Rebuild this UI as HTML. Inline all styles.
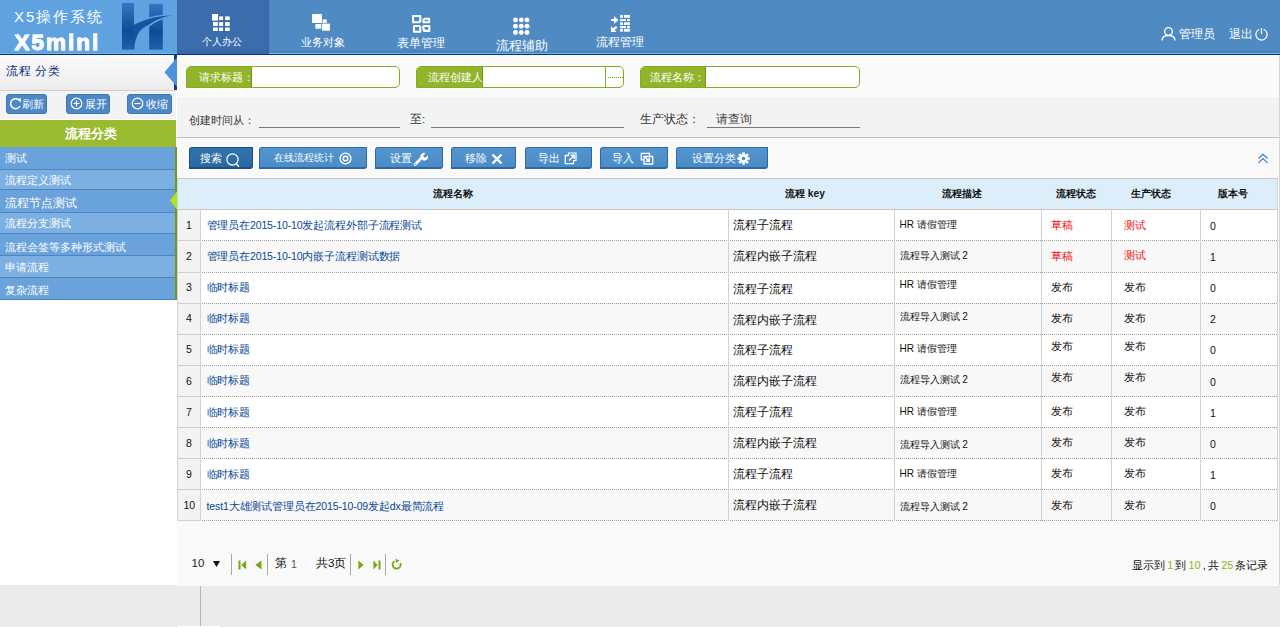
<!DOCTYPE html>
<html><head><meta charset="utf-8"><style>
*{box-sizing:border-box;margin:0;padding:0}
html,body{width:1280px;height:627px;overflow:hidden}
body{position:relative;background:#ebebeb;font-family:"Liberation Sans",sans-serif;font-size:11px;color:#333}
.a{position:absolute}
.t{position:absolute;white-space:nowrap;line-height:1}
.w{color:#fff}
</style></head><body>
<div class="a" style="left:0px;top:0px;width:1280px;height:55px;background:#4f8bc2"></div>
<div class="a" style="left:177px;top:50px;width:1103px;height:3px;background:#4a86bc"></div>
<div class="a" style="left:0px;top:0px;width:177px;height:53px;background:#5ea2e0"></div>
<div class="t w" style="left:14px;top:9px;font-size:15px;letter-spacing:2px">X5操作系统</div>
<div class="t" style="left:14.5px;top:31.5px;font-size:22.5px;font-weight:bold;letter-spacing:2.0px;-webkit-text-stroke:0.9px #fafafa;background:linear-gradient(#fff 50%,#e8e8e8);-webkit-background-clip:text;color:transparent">X5mini</div>
<svg class="a" style="left:118px;top:0" width="58" height="53" viewBox="0 0 58 53">
<defs><linearGradient id="hg" x1="0" y1="0" x2="0" y2="1"><stop offset="0" stop-color="#3474c4"/><stop offset="0.6" stop-color="#0f4c92"/><stop offset="1" stop-color="#1a62ad"/></linearGradient>
<clipPath id="cp"><rect x="24" y="0" width="40" height="53"/></clipPath></defs>
<rect x="4" y="3.1" width="12" height="46.5" fill="url(#hg)"/>
<rect x="31.2" y="3.9" width="13.6" height="45.7" fill="url(#hg)"/>
<path clip-path="url(#cp)" d="M15.9 25C24 21 36 16 54 15.6C46 16.5 38 19.5 31.2 24.6C26 27 22 30 20 34C17.5 39 16.5 44 16.3 49.6H15.9Z" fill="none" stroke="#5ea2e0" stroke-width="3.2"/>
<path d="M15.9 25C24 21 36 16 54 15.6C46 16.5 38 19.5 31.2 24.6C26 27 22 30 20 34C17.5 39 16.5 44 16.3 49.6H15.9Z" fill="#1554a0"/>
</svg>
<div class="a" style="left:0px;top:53px;width:1280px;height:1px;background:#72b2ee"></div>
<div class="a" style="left:0px;top:54px;width:1280px;height:1px;background:#0b3466"></div>
<div class="a" style="left:177px;top:0px;width:92px;height:54px;background:#3b6dac"></div>
<div class="a" style="left:177px;top:50px;width:92px;height:4px;background:#3767a8"></div>
<div class="a" style="left:267.5px;top:0px;width:1.5px;height:54px;background:#3564a6"></div>
<svg class="a" style="left:205px;top:10px" width="30" height="25" viewBox="0 0 30 25"><g fill="#fff">
<rect x="7" y="4" width="6" height="6.6"/><rect x="14.1" y="6.4" width="4" height="3.6"/><rect x="20.1" y="6.4" width="4.6" height="3.6"/>
<rect x="8" y="12" width="4.8" height="4"/><rect x="14.1" y="12" width="4" height="4"/><rect x="20.1" y="12" width="4.6" height="4"/>
<rect x="8" y="17.5" width="4.8" height="3.5"/><rect x="14.1" y="17.5" width="4" height="3.5"/><rect x="20.1" y="17.5" width="4.6" height="3.5"/></g></svg>
<div class="t w" style="left:202px;top:37px;font-size:10.1px">个人办公</div>
<svg class="a" style="left:305px;top:10px" width="30" height="25" viewBox="0 0 30 25"><g fill="#fff">
<rect x="7" y="4" width="9.9" height="9"/><rect x="17.7" y="9.4" width="4" height="3.4"/><rect x="10.4" y="14" width="5.9" height="4.7"/><rect x="17.1" y="13.6" width="7.8" height="7.1"/></g></svg>
<div class="t w" style="left:300.5px;top:37px;font-size:10.6px">业务对象</div>
<svg class="a" style="left:405px;top:10px" width="30" height="25" viewBox="0 0 30 25">
<g fill="none" stroke="#fff" stroke-width="2.1" stroke-linejoin="round">
<path d="M8 6H15.3V11.5L14 12.2H8Z"/><path d="M19.5 8.8H24.1V12.2H18.5V9.8Z"/>
<path d="M9 16H14.3L15.3 17V21.7H9Z"/><path d="M18.2 17L19 16H24.3V20.9H19Z"/></g></svg>
<div class="t w" style="left:397px;top:36.5px;font-size:12px">表单管理</div>
<svg class="a" style="left:505px;top:13px" width="30" height="25" viewBox="0 0 30 25"><g fill="#fff"><circle cx="10.5" cy="6.9" r="2.45"/><circle cx="16.3" cy="6.9" r="2.45"/><circle cx="22" cy="6.9" r="2.45"/><circle cx="10.5" cy="13.25" r="2.45"/><circle cx="16.3" cy="13.25" r="2.45"/><circle cx="22" cy="13.25" r="2.45"/><circle cx="10.5" cy="19.5" r="2.45"/><circle cx="16.3" cy="19.5" r="2.45"/><circle cx="22" cy="19.5" r="2.45"/></g></svg>
<div class="t w" style="left:496px;top:39.5px;font-size:12.6px">流程辅助</div>
<svg class="a" style="left:600px;top:8px" width="32" height="28" viewBox="0 0 32 28"><g fill="#fff">
<path d="M10.9 11.1H14V8.3L18.5 12 14 15.7V12.9H10.9z"/>
<path d="M10.9 18.2L13 20.3 15.8 17.9 17.4 19.4 14.7 21.9 16.6 23.9H10.9z"/>
<rect x="20.1" y="6.9" width="2.9" height="2.9"/><rect x="24" y="6.9" width="5.9" height="2.9"/>
<rect x="20.1" y="11.2" width="5.8" height="1.8"/><rect x="27" y="11.2" width="2.9" height="1.8"/>
<rect x="20.1" y="14.3" width="2.9" height="2.7"/><rect x="24" y="14.3" width="5.9" height="2.7"/>
<rect x="20.1" y="18.1" width="5.8" height="1.9"/><rect x="27" y="18.1" width="2.9" height="1.9"/>
<rect x="20.1" y="20.8" width="2.9" height="2.9"/><rect x="24" y="20.8" width="5.9" height="2.9"/></g></svg>
<div class="t w" style="left:596px;top:36px;font-size:12.2px">流程管理</div>
<svg class="a" style="left:1161px;top:27px" width="16" height="14" viewBox="0 0 16 14"><g fill="none" stroke="#fff" stroke-width="1.3">
<circle cx="7.5" cy="4.5" r="3.8"/><path d="M1 13.5c0-4 2.5-5 6.5-5s6.5 1 6.5 5"/></g></svg>
<div class="t w" style="left:1179px;top:28px;font-size:12px">管理员</div>
<div class="t w" style="left:1229px;top:28px;font-size:12px">退出</div>
<svg class="a" style="left:1255px;top:27px" width="14" height="14" viewBox="0 0 14 14"><g fill="none" stroke="#fff" stroke-width="1.2">
<path d="M4.3 2.3A5.6 5.6 0 1 0 8.7 2.3"/><path d="M6.5 1v6"/></g></svg>
<div class="a" style="left:0px;top:55px;width:177px;height:530px;background:#fff"></div>
<div class="a" style="left:0px;top:55px;width:176px;height:34.5px;background:linear-gradient(#fbfbfb,#ececec)"></div>
<div class="a" style="left:0px;top:89.5px;width:176px;height:1px;background:#cfcfcf"></div>
<div class="t" style="left:6px;top:64.5px;font-size:12.3px;letter-spacing:0.6px;color:#0f2d80">流程 分类</div>
<div class="a" style="left:0px;top:90.5px;width:176px;height:29px;background:#f3f3f3"></div>
<div class="a" style="left:0px;top:119px;width:176px;height:0.5px;background:#fff"></div>
<div class="a" style="left:6px;top:94px;width:41px;height:19.5px;background:#4b88c5;border:1px solid #3d77b3;border-radius:3px"><svg class="a" style="left:2px;top:2px" width="13" height="13" viewBox="0 0 13 13"><path d="M10.5 3.5A5 5 0 1 0 11 9" fill="none" stroke="#fff" stroke-width="1.5"/><path d="M8 1.5h4v4z" fill="#fff"/></svg><div class="t w" style="left:15px;top:3.5px;font-size:11px">刷新</div></div>
<div class="a" style="left:66px;top:94px;width:44px;height:19.5px;background:#4b88c5;border:1px solid #3d77b3;border-radius:3px"><svg class="a" style="left:2.5px;top:2px" width="14" height="14" viewBox="0 0 14 14"><circle cx="6.5" cy="6.5" r="5.3" fill="none" stroke="#fff" stroke-width="1.2"/><path d="M6.5 3.5v6M3.5 6.5h6" stroke="#fff" stroke-width="1.2"/></svg><div class="t w" style="left:18px;top:3.5px;font-size:11px">展开</div></div>
<div class="a" style="left:127px;top:94px;width:45px;height:19.5px;background:#4b88c5;border:1px solid #3d77b3;border-radius:3px"><svg class="a" style="left:2.5px;top:2px" width="14" height="14" viewBox="0 0 14 14"><circle cx="6.5" cy="6.5" r="5.3" fill="none" stroke="#fff" stroke-width="1.2"/><path d="M3.5 6.5h6" stroke="#fff" stroke-width="1.2"/></svg><div class="t w" style="left:18px;top:3.5px;font-size:11px">收缩</div></div>
<div class="a" style="left:0px;top:119.5px;width:176px;height:27px;background:#9aba2f"></div>
<div class="t w" style="left:65px;top:128.3px;font-size:12.6px;font-weight:bold">流程分类</div>
<div class="a" style="left:0px;top:146.5px;width:176px;height:22.80000000000001px;background:#6aa3dc"></div>
<div class="a" style="left:0px;top:169.3px;width:176px;height:20.099999999999994px;background:#7cb0e2"></div>
<div class="a" style="left:0px;top:189.4px;width:176px;height:22.900000000000006px;background:#6aa3dc"></div>
<div class="a" style="left:0px;top:212.3px;width:176px;height:21.0px;background:#7cb0e2"></div>
<div class="a" style="left:0px;top:233.3px;width:176px;height:22.099999999999994px;background:#6aa3dc"></div>
<div class="a" style="left:0px;top:255.4px;width:176px;height:21.799999999999983px;background:#7cb0e2"></div>
<div class="a" style="left:0px;top:277.2px;width:176px;height:22.100000000000023px;background:#6aa3dc"></div>
<div class="a" style="left:0px;top:168.8px;width:176px;height:1px;background:#4f85bf"></div>
<div class="t " style="left:5px;top:152.50px;font-size:11px;color:#fff">测试</div>
<div class="a" style="left:0px;top:188.9px;width:176px;height:1px;background:#4f85bf"></div>
<div class="t " style="left:5px;top:175.30px;font-size:11px;color:#fff">流程定义测试</div>
<div class="a" style="left:0px;top:211.8px;width:176px;height:1px;background:#4f85bf"></div>
<div class="t " style="left:5px;top:196.60px;font-size:12px;color:#fff">流程节点测试</div>
<div class="a" style="left:0px;top:232.8px;width:176px;height:1px;background:#4f85bf"></div>
<div class="t " style="left:5px;top:218.00px;font-size:11px;color:#fff">流程分支测试</div>
<div class="a" style="left:0px;top:254.9px;width:176px;height:1px;background:#4f85bf"></div>
<div class="t " style="left:5px;top:241.50px;font-size:11px;color:#fff">流程会签等多种形式测试</div>
<div class="a" style="left:0px;top:276.7px;width:176px;height:1px;background:#4f85bf"></div>
<div class="t " style="left:5px;top:261.80px;font-size:11px;color:#fff">申请流程</div>
<div class="a" style="left:0px;top:298.8px;width:176px;height:1px;background:#4f85bf"></div>
<div class="t " style="left:5px;top:284.50px;font-size:11px;color:#fff">复杂流程</div>
<div class="a" style="left:175px;top:146.5px;width:2px;height:153px;background:#6f9a18"></div>
<svg class="a" style="left:169.5px;top:189.5px" width="8" height="21" viewBox="0 0 8 21"><path d="M8 0L0 10.5L8 21z" fill="#b4e31a"/></svg>
<div class="a" style="left:174px;top:55px;width:4px;height:34.5px;background:#123f73"></div>
<svg class="a" style="left:163.5px;top:55px" width="15" height="35" viewBox="0 0 15 35"><path d="M14.5 0.8V33.5L0.5 17.2z" fill="#4e93da"/></svg>
<div class="a" style="left:177px;top:55px;width:1103px;height:530px;background:#f9f9f9"></div>
<div class="a" style="left:177px;top:55px;width:1103px;height:42px;background:#fafafa"></div>
<div class="a" style="left:186px;top:66px;width:214px;height:22px;border:1px solid #7fae1e;border-radius:5px 5px 5px 0;background:#fff;overflow:hidden"><div class="a" style="left:-1px;top:-1px;width:66px;height:22px;background:#92b42a;border-right:1px solid #6f9a18"></div><div class="t w" style="left:12px;top:5.2px;font-size:10.6px">请求标题：</div></div>
<div class="a" style="left:416px;top:66px;width:208px;height:22px;border:1px solid #7fae1e;border-radius:5px 5px 5px 0;background:#fff;overflow:hidden"><div class="a" style="left:-1px;top:-1px;width:67px;height:22px;background:#92b42a;border-right:1px solid #6f9a18"></div><div class="t w" style="left:11px;top:5.2px;font-size:10.6px">流程创建人</div><div class="a" style="left:187.8px;top:0;width:1px;height:20px;background:#7fae1e"></div><div class="a" style="left:190.5px;top:9.6px;width:15px;height:0;border-top:1px dotted #76a814"></div></div>
<div class="a" style="left:640px;top:66px;width:220px;height:22px;border:1px solid #7fae1e;border-radius:5px 5px 5px 0;background:#fff;overflow:hidden"><div class="a" style="left:-1px;top:-1px;width:66px;height:22px;background:#92b42a;border-right:1px solid #6f9a18"></div><div class="t w" style="left:9px;top:5.25px;font-size:10.5px">流程名称：</div></div>
<div class="a" style="left:177px;top:97px;width:1103px;height:40px;background:#f3f3f3"></div>
<div class="a" style="left:177px;top:137px;width:1103px;height:1px;background:#c0c0c0"></div>
<div class="t " style="left:188.5px;top:114.85px;font-size:11.3px;color:#333">创建时间从：</div>
<div class="a" style="left:259px;top:126.5px;width:141px;height:1px;background:#777"></div>
<div class="t " style="left:410px;top:114.25px;font-size:11.5px;color:#333">至:</div>
<div class="a" style="left:430.5px;top:126.5px;width:193px;height:1px;background:#777"></div>
<div class="t " style="left:640px;top:114.25px;font-size:11.5px;color:#333">生产状态：</div>
<div class="t " style="left:715.5px;top:114.25px;font-size:11.5px;color:#444">请查询</div>
<div class="a" style="left:707px;top:126.5px;width:153px;height:1px;background:#777"></div>
<div class="a" style="left:189px;top:147px;width:64px;height:21.5px;border-radius:3px 0 3px 0;background:linear-gradient(#3373ad,#2b68a1);border:1px solid #1c4f85;border-bottom-width:2px"><div class="t w" style="left:10px;top:4.5px;font-size:11px">搜索</div><svg class="a" style="left:35.5px;top:4.5px" width="15" height="15" viewBox="0 0 15 15"><circle cx="6.5" cy="6.5" r="5.6" fill="none" stroke="#fff" stroke-width="1.2"/><path d="M10.5 10.8l2.5 3" stroke="#fff" stroke-width="1.3"/></svg></div>
<div class="a" style="left:259px;top:147px;width:108px;height:21.5px;border-radius:3px 0 3px 0;background:linear-gradient(#5294cc,#4b8cc6);border:1px solid #2e68a5;border-bottom-width:2px"><div class="t w" style="left:13.5px;top:4.85px;font-size:10.3px">在线流程统计</div><svg class="a" style="left:79px;top:4px" width="14" height="14" viewBox="0 0 14 14"><circle cx="6.5" cy="6.5" r="5.4" fill="none" stroke="#fff" stroke-width="1.4"/><circle cx="6.5" cy="6.5" r="2.3" fill="none" stroke="#fff" stroke-width="1.4"/></svg></div>
<div class="a" style="left:375px;top:147px;width:67.5px;height:21.5px;border-radius:3px 0 3px 0;background:linear-gradient(#5294cc,#4b8cc6);border:1px solid #2e68a5;border-bottom-width:2px"><div class="t w" style="left:14px;top:4.5px;font-size:11px">设置</div><svg class="a" style="left:37.3px;top:3.5px" width="15" height="15" viewBox="0 0 15 15"><path d="M2 12.5L8.5 6" stroke="#fff" stroke-width="2.8" stroke-linecap="round"/><path d="M7.2 5.2a3.8 3.8 0 0 1 5.3-4l-2.2 2.3.5 1.7 1.7.5 2.2-2.3a3.8 3.8 0 0 1-4.2 5.2z" fill="#fff"/><circle cx="2.2" cy="12.3" r="0.7" fill="#4b8cc6"/></svg></div>
<div class="a" style="left:451px;top:147px;width:64.5px;height:21.5px;border-radius:3px 0 3px 0;background:linear-gradient(#5294cc,#4b8cc6);border:1px solid #2e68a5;border-bottom-width:2px"><div class="t w" style="left:13px;top:4.5px;font-size:11px">移除</div><svg class="a" style="left:39px;top:4.5px" width="12" height="12" viewBox="0 0 12 12"><path d="M1.5 1.5l9 9M10.5 1.5l-9 9" stroke="#fff" stroke-width="2.4"/></svg></div>
<div class="a" style="left:524.5px;top:147px;width:67px;height:21.5px;border-radius:3px 0 3px 0;background:linear-gradient(#5294cc,#4b8cc6);border:1px solid #2e68a5;border-bottom-width:2px"><div class="t w" style="left:12.5px;top:4.5px;font-size:11px">导出</div><svg class="a" style="left:38.5px;top:4px" width="13" height="13" viewBox="0 0 13 13"><path d="M5 3.5H1.3v8.2h8.2V8" fill="none" stroke="#fff" stroke-width="1.3"/><path d="M4.5 3.5V1h7.5v7.5H9.5" fill="none" stroke="#fff" stroke-width="1.2"/><path d="M5 8.5l5-5M6.5 3.3h3.7v3.7" fill="none" stroke="#fff" stroke-width="1.4"/></svg></div>
<div class="a" style="left:599.5px;top:147px;width:68.5px;height:21.5px;border-radius:3px 0 3px 0;background:linear-gradient(#5294cc,#4b8cc6);border:1px solid #2e68a5;border-bottom-width:2px"><div class="t w" style="left:11.5px;top:4.5px;font-size:11px">导入</div><svg class="a" style="left:39.5px;top:4px" width="14" height="13" viewBox="0 0 14 13"><path d="M9.5 4.5V1.3H1.3v6.5H4" fill="none" stroke="#fff" stroke-width="1.3"/><path d="M4 4.5h8.7v7.5H4z" fill="none" stroke="#fff" stroke-width="1.3"/><path d="M4.5 4.5l4.5 4.5M9.3 5.8v3.5H5.8" fill="none" stroke="#fff" stroke-width="1.4"/></svg></div>
<div class="a" style="left:676px;top:147px;width:92px;height:21.5px;border-radius:3px 0 3px 0;background:linear-gradient(#5294cc,#4b8cc6);border:1px solid #2e68a5;border-bottom-width:2px"><div class="t w" style="left:14.5px;top:4.5px;font-size:11px">设置分类</div><svg class="a" style="left:59.5px;top:4px" width="13" height="13" viewBox="0 0 13 13"><g fill="#fff"><circle cx="6.5" cy="6.5" r="4.2"/><rect x="5.2" y="0.3" width="2.6" height="12.4"/><rect x="0.3" y="5.2" width="12.4" height="2.6"/><rect x="5.2" y="0.3" width="2.6" height="12.4" transform="rotate(45 6.5 6.5)"/><rect x="5.2" y="0.3" width="2.6" height="12.4" transform="rotate(-45 6.5 6.5)"/></g><circle cx="6.5" cy="6.5" r="1.8" fill="#4a8cc6"/></svg></div>
<svg class="a" style="left:1257px;top:153px" width="12" height="11" viewBox="0 0 12 11"><path d="M1.5 5.5l4.5-4.2 4.5 4.2M1.5 9.8l4.5-4.2 4.5 4.2" fill="none" stroke="#2f7bd0" stroke-width="1.1"/></svg>
<div class="a" style="left:177px;top:178px;width:1100px;height:1px;background:#c9c9c9"></div>
<div class="a" style="left:177px;top:179px;width:1100px;height:30px;background:#ddeefb"></div>
<div class="a" style="left:177px;top:209px;width:1100px;height:1px;background:#c9c9c9"></div>
<div class="a" style="left:1277px;top:178px;width:3px;height:343px;background:#fdfdfd"></div>
<div class="t " style="left:433px;top:188.90px;font-size:10.2px;font-weight:bold;color:#111">流程名称</div>
<div class="t " style="left:785px;top:188.90px;font-size:10.2px;font-weight:bold;color:#111">流程 key</div>
<div class="t " style="left:942px;top:188.90px;font-size:10.2px;font-weight:bold;color:#111">流程描述</div>
<div class="t " style="left:1056px;top:188.90px;font-size:10.2px;font-weight:bold;color:#111">流程状态</div>
<div class="t " style="left:1130.5px;top:188.90px;font-size:10.2px;font-weight:bold;color:#111">生产状态</div>
<div class="t " style="left:1218px;top:188.90px;font-size:10.2px;font-weight:bold;color:#111">版本号</div>
<div class="a" style="left:200px;top:209.5px;width:1077px;height:31.1px;background:#fff"></div>
<div class="a" style="left:177.5px;top:209.5px;width:22.5px;height:31.1px;background:#f3f3f3"></div>
<div class="a" style="left:200px;top:240.6px;width:1077px;height:31.1px;background:#f8f8f8"></div>
<div class="a" style="left:177.5px;top:240.6px;width:22.5px;height:31.1px;background:#f3f3f3"></div>
<div class="a" style="left:200px;top:271.7px;width:1077px;height:31.1px;background:#fff"></div>
<div class="a" style="left:177.5px;top:271.7px;width:22.5px;height:31.1px;background:#f3f3f3"></div>
<div class="a" style="left:200px;top:302.8px;width:1077px;height:31.1px;background:#f8f8f8"></div>
<div class="a" style="left:177.5px;top:302.8px;width:22.5px;height:31.1px;background:#f3f3f3"></div>
<div class="a" style="left:200px;top:333.9px;width:1077px;height:31.1px;background:#fff"></div>
<div class="a" style="left:177.5px;top:333.9px;width:22.5px;height:31.1px;background:#f3f3f3"></div>
<div class="a" style="left:200px;top:365.0px;width:1077px;height:31.1px;background:#f8f8f8"></div>
<div class="a" style="left:177.5px;top:365.0px;width:22.5px;height:31.1px;background:#f3f3f3"></div>
<div class="a" style="left:200px;top:396.1px;width:1077px;height:31.1px;background:#fff"></div>
<div class="a" style="left:177.5px;top:396.1px;width:22.5px;height:31.1px;background:#f3f3f3"></div>
<div class="a" style="left:200px;top:427.2px;width:1077px;height:31.1px;background:#f8f8f8"></div>
<div class="a" style="left:177.5px;top:427.2px;width:22.5px;height:31.1px;background:#f3f3f3"></div>
<div class="a" style="left:200px;top:458.3px;width:1077px;height:31.1px;background:#fff"></div>
<div class="a" style="left:177.5px;top:458.3px;width:22.5px;height:31.1px;background:#f3f3f3"></div>
<div class="a" style="left:200px;top:489.4px;width:1077px;height:31.1px;background:#f8f8f8"></div>
<div class="a" style="left:177.5px;top:489.4px;width:22.5px;height:31.1px;background:#f3f3f3"></div>
<div class="a" style="left:177.5px;top:240.4px;width:22.5px;height:1px;background:#cfcfcf"></div>
<div class="a" style="left:200px;top:240.40px;width:1077px;height:0;border-top:1px dotted #a0a0a0"></div>
<div class="t " style="left:186px;top:220.00px;font-size:10.5px;color:#111">1</div>
<div class="t " style="left:206.5px;top:220.03px;font-size:10.55px;color:#0a4698;letter-spacing:-0.14px">管理员在2015-10-10发起流程外部子流程测试</div>
<div class="t " style="left:732.5px;top:219.18px;font-size:11.65px;color:#111">流程子流程</div>
<div class="t " style="left:899.5px;top:219.95px;font-size:10.1px;color:#111">HR 请假管理</div>
<div class="t " style="left:1050.5px;top:219.50px;font-size:11px;color:#f41010">草稿</div>
<div class="t " style="left:1123.5px;top:219.50px;font-size:11px;color:#f41010">测试</div>
<div class="t " style="left:1210px;top:220.75px;font-size:10.5px;color:#111">0</div>
<div class="a" style="left:177.5px;top:271.5px;width:22.5px;height:1px;background:#cfcfcf"></div>
<div class="a" style="left:200px;top:271.50px;width:1077px;height:0;border-top:1px dotted #a0a0a0"></div>
<div class="t " style="left:186px;top:251.10px;font-size:10.5px;color:#111">2</div>
<div class="t " style="left:206.5px;top:250.72px;font-size:10.55px;color:#0a4698;letter-spacing:-0.14px">管理员在2015-10-10内嵌子流程测试数据</div>
<div class="t " style="left:732.5px;top:250.18px;font-size:11.65px;color:#111">流程内嵌子流程</div>
<div class="t " style="left:899.5px;top:250.95px;font-size:10.1px;color:#111">流程导入测试 2</div>
<div class="t " style="left:1050.5px;top:250.70px;font-size:11px;color:#f41010">草稿</div>
<div class="t " style="left:1123.5px;top:250.30px;font-size:11px;color:#f41010">测试</div>
<div class="t " style="left:1210px;top:251.65px;font-size:10.5px;color:#111">1</div>
<div class="a" style="left:177.5px;top:302.6px;width:22.5px;height:1px;background:#cfcfcf"></div>
<div class="a" style="left:200px;top:302.60px;width:1077px;height:0;border-top:1px dotted #a0a0a0"></div>
<div class="t " style="left:186px;top:282.20px;font-size:10.5px;color:#111">3</div>
<div class="t " style="left:206.5px;top:282.12px;font-size:10.55px;color:#0a4698;letter-spacing:-0.14px">临时标题</div>
<div class="t " style="left:732.5px;top:282.88px;font-size:11.65px;color:#111">流程子流程</div>
<div class="t " style="left:899.5px;top:279.85px;font-size:10.1px;color:#111">HR 请假管理</div>
<div class="t " style="left:1050.5px;top:281.50px;font-size:11px;color:#111">发布</div>
<div class="t " style="left:1123.5px;top:281.50px;font-size:11px;color:#111">发布</div>
<div class="t " style="left:1210px;top:282.95px;font-size:10.5px;color:#111">0</div>
<div class="a" style="left:177.5px;top:333.7px;width:22.5px;height:1px;background:#cfcfcf"></div>
<div class="a" style="left:200px;top:333.70px;width:1077px;height:0;border-top:1px dotted #a0a0a0"></div>
<div class="t " style="left:186px;top:313.30px;font-size:10.5px;color:#111">4</div>
<div class="t " style="left:206.5px;top:313.12px;font-size:10.55px;color:#0a4698;letter-spacing:-0.14px">临时标题</div>
<div class="t " style="left:732.5px;top:314.18px;font-size:11.65px;color:#111">流程内嵌子流程</div>
<div class="t " style="left:899.5px;top:312.35px;font-size:10.1px;color:#111">流程导入测试 2</div>
<div class="t " style="left:1050.5px;top:313.10px;font-size:11px;color:#111">发布</div>
<div class="t " style="left:1123.5px;top:313.10px;font-size:11px;color:#111">发布</div>
<div class="t " style="left:1210px;top:313.95px;font-size:10.5px;color:#111">2</div>
<div class="a" style="left:177.5px;top:364.8px;width:22.5px;height:1px;background:#cfcfcf"></div>
<div class="a" style="left:200px;top:364.80px;width:1077px;height:0;border-top:1px dotted #a0a0a0"></div>
<div class="t " style="left:186px;top:344.40px;font-size:10.5px;color:#111">5</div>
<div class="t " style="left:206.5px;top:343.93px;font-size:10.55px;color:#0a4698;letter-spacing:-0.14px">临时标题</div>
<div class="t " style="left:732.5px;top:343.57px;font-size:11.65px;color:#111">流程子流程</div>
<div class="t " style="left:899.5px;top:343.95px;font-size:10.1px;color:#111">HR 请假管理</div>
<div class="t " style="left:1050.5px;top:341.30px;font-size:11px;color:#111">发布</div>
<div class="t " style="left:1123.5px;top:341.30px;font-size:11px;color:#111">发布</div>
<div class="t " style="left:1210px;top:345.25px;font-size:10.5px;color:#111">0</div>
<div class="a" style="left:177.5px;top:395.9px;width:22.5px;height:1px;background:#cfcfcf"></div>
<div class="a" style="left:200px;top:395.90px;width:1077px;height:0;border-top:1px dotted #a0a0a0"></div>
<div class="t " style="left:186px;top:375.50px;font-size:10.5px;color:#111">6</div>
<div class="t " style="left:206.5px;top:374.93px;font-size:10.55px;color:#0a4698;letter-spacing:-0.14px">临时标题</div>
<div class="t " style="left:732.5px;top:375.18px;font-size:11.65px;color:#111">流程内嵌子流程</div>
<div class="t " style="left:899.5px;top:375.05px;font-size:10.1px;color:#111">流程导入测试 2</div>
<div class="t " style="left:1050.5px;top:372.20px;font-size:11px;color:#111">发布</div>
<div class="t " style="left:1123.5px;top:372.20px;font-size:11px;color:#111">发布</div>
<div class="t " style="left:1210px;top:376.95px;font-size:10.5px;color:#111">0</div>
<div class="a" style="left:177.5px;top:427.0px;width:22.5px;height:1px;background:#cfcfcf"></div>
<div class="a" style="left:200px;top:427.00px;width:1077px;height:0;border-top:1px dotted #a0a0a0"></div>
<div class="t " style="left:186px;top:406.60px;font-size:10.5px;color:#111">7</div>
<div class="t " style="left:206.5px;top:406.53px;font-size:10.55px;color:#0a4698;letter-spacing:-0.14px">临时标题</div>
<div class="t " style="left:732.5px;top:405.68px;font-size:11.65px;color:#111">流程子流程</div>
<div class="t " style="left:899.5px;top:407.25px;font-size:10.1px;color:#111">HR 请假管理</div>
<div class="t " style="left:1050.5px;top:405.50px;font-size:11px;color:#111">发布</div>
<div class="t " style="left:1123.5px;top:405.50px;font-size:11px;color:#111">发布</div>
<div class="t " style="left:1210px;top:408.25px;font-size:10.5px;color:#111">1</div>
<div class="a" style="left:177.5px;top:458.1px;width:22.5px;height:1px;background:#cfcfcf"></div>
<div class="a" style="left:200px;top:458.10px;width:1077px;height:0;border-top:1px dotted #a0a0a0"></div>
<div class="t " style="left:186px;top:437.70px;font-size:10.5px;color:#111">8</div>
<div class="t " style="left:206.5px;top:437.93px;font-size:10.55px;color:#0a4698;letter-spacing:-0.14px">临时标题</div>
<div class="t " style="left:732.5px;top:437.38px;font-size:11.65px;color:#111">流程内嵌子流程</div>
<div class="t " style="left:899.5px;top:440.15px;font-size:10.1px;color:#111">流程导入测试 2</div>
<div class="t " style="left:1050.5px;top:437.40px;font-size:11px;color:#111">发布</div>
<div class="t " style="left:1123.5px;top:437.40px;font-size:11px;color:#111">发布</div>
<div class="t " style="left:1210px;top:439.15px;font-size:10.5px;color:#111">0</div>
<div class="a" style="left:177.5px;top:489.2px;width:22.5px;height:1px;background:#cfcfcf"></div>
<div class="a" style="left:200px;top:489.20px;width:1077px;height:0;border-top:1px dotted #a0a0a0"></div>
<div class="t " style="left:186px;top:468.80px;font-size:10.5px;color:#111">9</div>
<div class="t " style="left:206.5px;top:469.03px;font-size:10.55px;color:#0a4698;letter-spacing:-0.14px">临时标题</div>
<div class="t " style="left:732.5px;top:468.38px;font-size:11.65px;color:#111">流程子流程</div>
<div class="t " style="left:899.5px;top:469.35px;font-size:10.1px;color:#111">HR 请假管理</div>
<div class="t " style="left:1050.5px;top:468.30px;font-size:11px;color:#111">发布</div>
<div class="t " style="left:1123.5px;top:468.30px;font-size:11px;color:#111">发布</div>
<div class="t " style="left:1210px;top:470.05px;font-size:10.5px;color:#111">1</div>
<div class="a" style="left:177.5px;top:520.3px;width:22.5px;height:1px;background:#cfcfcf"></div>
<div class="a" style="left:200px;top:520.30px;width:1077px;height:0;border-top:1px dotted #a0a0a0"></div>
<div class="t " style="left:183.5px;top:499.90px;font-size:10.5px;color:#111">10</div>
<div class="t " style="left:206.5px;top:500.93px;font-size:10.55px;color:#0a4698;letter-spacing:-0.14px">test1大雄测试管理员在2015-10-09发起dx最简流程</div>
<div class="t " style="left:732.5px;top:499.48px;font-size:11.65px;color:#111">流程内嵌子流程</div>
<div class="t " style="left:899.5px;top:502.35px;font-size:10.1px;color:#111">流程导入测试 2</div>
<div class="t " style="left:1050.5px;top:500.20px;font-size:11px;color:#111">发布</div>
<div class="t " style="left:1123.5px;top:500.20px;font-size:11px;color:#111">发布</div>
<div class="t " style="left:1210px;top:501.45px;font-size:10.5px;color:#111">0</div>
<div class="a" style="left:177px;top:178px;width:1px;height:342.5px;background:#d2d2d2"></div>
<div class="a" style="left:200px;top:209.5px;width:1px;height:311.0px;background:#d2d2d2"></div>
<div class="a" style="left:728px;top:209.5px;width:1px;height:311.0px;background:#d2d2d2"></div>
<div class="a" style="left:893.5px;top:209.5px;width:1px;height:311.0px;background:#d2d2d2"></div>
<div class="a" style="left:1040.5px;top:209.5px;width:1px;height:311.0px;background:#d2d2d2"></div>
<div class="a" style="left:1110.5px;top:209.5px;width:1px;height:311.0px;background:#d2d2d2"></div>
<div class="a" style="left:1200px;top:209.5px;width:1px;height:311.0px;background:#d2d2d2"></div>
<div class="a" style="left:1276.5px;top:178px;width:1px;height:342.5px;background:#d2d2d2"></div>
<div class="a" style="left:177px;top:520.5px;width:1103px;height:65px;background:#f9f9f9"></div>
<div class="a" style="left:1279px;top:55px;width:1px;height:530px;background:#d6d6d6"></div>
<div class="a" style="left:200px;top:585.5px;width:1px;height:41px;background:#b4b4b4"></div>
<div class="a" style="left:178px;top:626px;width:42px;height:1px;background:#fff"></div>
<div class="t " style="left:191.5px;top:558.25px;font-size:11.5px;color:#222">10</div>
<svg class="a" style="left:213px;top:561px" width="7" height="6" viewBox="0 0 7 6"><path d="M0 0h7L3.5 6z" fill="#111"/></svg>
<div class="a" style="left:231px;top:554px;width:1px;height:21px;background:#a8a8a8"></div>
<div class="a" style="left:267px;top:554px;width:1px;height:21px;background:#a8a8a8"></div>
<div class="a" style="left:350px;top:554px;width:1px;height:21px;background:#a8a8a8"></div>
<div class="a" style="left:385px;top:554px;width:1px;height:21px;background:#a8a8a8"></div>
<svg class="a" style="left:237.5px;top:559.5px" width="9" height="10" viewBox="0 0 9 10"><path d="M0.5 0.5h2v9h-2zM8.2 0.5v9L3.3 5z" fill="#76a814"/></svg>
<svg class="a" style="left:254.5px;top:559.5px" width="7" height="10" viewBox="0 0 7 10"><path d="M6.5 0.5v9L0.4 5z" fill="#76a814"/></svg>
<div class="t " style="left:274.5px;top:558.25px;font-size:11.5px;color:#111">第</div>
<div class="t " style="left:291px;top:558.75px;font-size:10.5px;color:#555">1</div>
<div class="t " style="left:316px;top:558.25px;font-size:11.5px;color:#111">共3页</div>
<svg class="a" style="left:357.5px;top:559.5px" width="7" height="10" viewBox="0 0 7 10"><path d="M0.4 0.5v9L5.6 5z" fill="#76a814"/></svg>
<svg class="a" style="left:372.5px;top:559.5px" width="9" height="10" viewBox="0 0 9 10"><path d="M0.4 0.5v9L4.7 5zM5.5 0.5h2v9h-2z" fill="#76a814"/></svg>
<svg class="a" style="left:390.5px;top:557.5px" width="11" height="12" viewBox="0 0 11 12"><path d="M3.5 3.2A4 4 0 1 0 9.3 5" fill="none" stroke="#76a814" stroke-width="1.9"/><path d="M4.5 0.8L8.5 2.5 5 5z" fill="#76a814"/></svg>
<div class="t " style="left:1132px;top:559.88px;font-size:10.85px;color:#111">显示到<span style="color:#8ab425">&thinsp;1&thinsp;</span>到<span style="color:#8ab425">&thinsp;10&thinsp;</span>,&thinsp;共<span style="color:#8ab425">&thinsp;25&thinsp;</span>条记录</div>
</body></html>
